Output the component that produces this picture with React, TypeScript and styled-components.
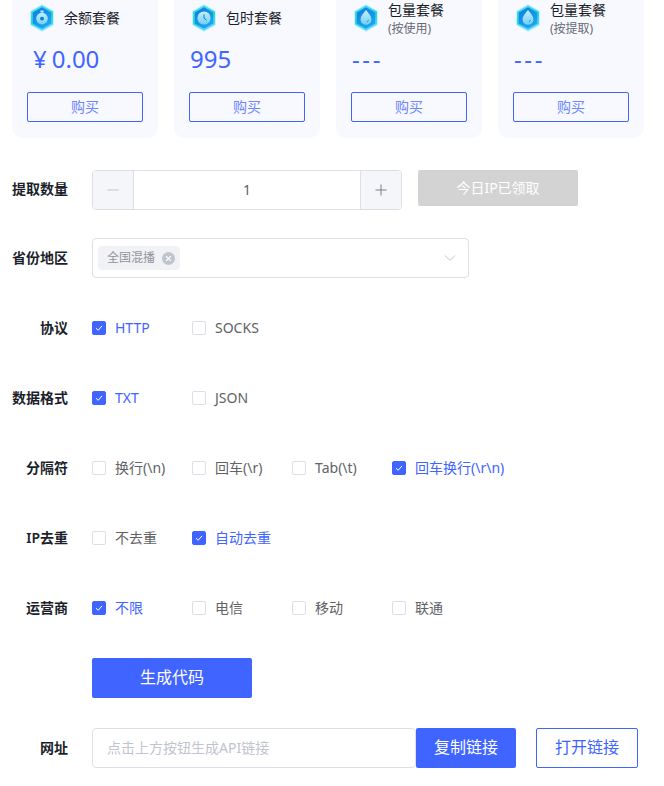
import styled, { createGlobalStyle } from 'styled-components'

const GlobalStyle = createGlobalStyle`
  html,
  body {
    margin: 0;
    height: 100%;
    overflow: hidden;
    background: #fff;
  }
  * {
    box-sizing: border-box;
  }
  body {
    font-family: 'Noto Sans', 'Noto Sans CJK SC', sans-serif;
    font-size: 14px;
    color: #606266;
  }
`

const BLUE = '#4064ff'

type IconKind = 'wallet' | 'clock' | 'drop'

const HexIcon = ({ kind, uid }: { kind: IconKind; uid: string }) => (
  <IconSvg viewBox="0 0 24 28">
    <defs>
      <linearGradient id={`${uid}-o`} x1="0" y1="0" x2="0.3" y2="1">
        <stop offset="0" stopColor="#5fdcf5" />
        <stop offset="0.6" stopColor="#1fdcc8" />
        <stop offset="1" stopColor="#58d8ff" />
      </linearGradient>
      <linearGradient id={`${uid}-i`} x1="0.2" y1="0" x2="0.8" y2="1">
        <stop offset="0" stopColor="#0d80e6" />
        <stop offset="1" stopColor="#22a8f0" />
      </linearGradient>
      <linearGradient id={`${uid}-g`} x1="0" y1="0" x2="0" y2="1">
        <stop offset="0" stopColor="#c4f0fd" />
        <stop offset="1" stopColor="#6fd0f5" />
      </linearGradient>
    </defs>
    <path d="M12 0 24 7V21L12 28 0 21V7Z" fill="#8fe8fa" fillOpacity="0.45" />
    <path d="M12 1.2 23 7.6V20.4L12 26.8 1 20.4V7.6Z" fill={`url(#${uid}-o)`} />
    <path d="M12 3.2 21.2 8.6V19.4L12 24.8 2.8 19.4V8.6Z" fill={`url(#${uid}-i)`} />
    {kind === 'wallet' && (
      <>
        <rect x="10.4" y="6.6" width="3.2" height="1.8" rx="0.4" fill="#bfeeff" />
        <circle cx="12" cy="14.6" r="5.8" fill={`url(#${uid}-g)`} />
        <circle cx="12" cy="14.6" r="1.9" fill="#1277c9" />
      </>
    )}
    {kind === 'clock' && (
      <>
        <circle cx="12" cy="14" r="6.6" fill={`url(#${uid}-g)`} />
        <path d="M12 10.4V14.2L14.6 16.2" fill="none" stroke="#1277c9" strokeWidth="1" />
      </>
    )}
    {kind === 'drop' && (
      <>
        <path d="M12 6C14.8 9.6 17.4 12 17.4 15.4A5.4 5.4 0 0 1 6.6 15.4C6.6 12 9.2 9.6 12 6Z" fill={`url(#${uid}-g)`} />
        <path d="M14.6 15.8A2.8 2.8 0 0 1 12.8 18" fill="none" stroke="#2a8fd8" strokeWidth="0.9" />
      </>
    )}
  </IconSvg>
)

const CheckMark = () => (
  <svg width="10" height="10" viewBox="0 0 10 10">
    <path d="M2 5.2 4.2 7.3 8 2.9" fill="none" stroke="#fff" strokeWidth="1" />
  </svg>
)

const plans = [
  { kind: 'wallet' as IconKind, title: '余额套餐', currency: '¥', value: '0.00' },
  { kind: 'clock' as IconKind, title: '包时套餐', value: '995' },
  { kind: 'drop' as IconKind, title: '包量套餐', sub: '(按使用)', value: '---' },
  { kind: 'drop' as IconKind, title: '包量套餐', sub: '(按提取)', value: '---' }
]

const optionRows = [
  {
    label: '协议',
    options: [
      { text: 'HTTP', on: true },
      { text: 'SOCKS' }
    ]
  },
  {
    label: '数据格式',
    options: [
      { text: 'TXT', on: true },
      { text: 'JSON' }
    ]
  },
  {
    label: '分隔符',
    options: [
      { text: '换行(\\n)' },
      { text: '回车(\\r)' },
      { text: 'Tab(\\t)' },
      { text: '回车换行(\\r\\n)', on: true }
    ]
  },
  {
    label: 'IP去重',
    options: [
      { text: '不去重' },
      { text: '自动去重', on: true }
    ]
  },
  {
    label: '运营商',
    options: [
      { text: '不限', on: true },
      { text: '电信' },
      { text: '移动' },
      { text: '联通' }
    ]
  }
]

const App = () => {
  return (
    <Page>
      <GlobalStyle />
      <CardRow>
        {plans.map((plan, i) => (
          <Card key={i}>
            <CardHead>
              <HexIcon kind={plan.kind} uid={`hex${i}`} />
              <CardText $hasSub={!!plan.sub}>
                <CardTitle>{plan.title}</CardTitle>
                {plan.sub && <CardSub>{plan.sub}</CardSub>}
              </CardText>
            </CardHead>
            <CardValue $empty={plan.value === '---'}>
              {plan.currency && <Currency>{plan.currency}</Currency>}
              {plan.value}
            </CardValue>
            <BuyButton>购买</BuyButton>
          </Card>
        ))}
      </CardRow>

      <StepperRow>
        <StepperLabel>提取数量</StepperLabel>
        <Stepper>
          <StepButton>
            <svg width="12" height="12" viewBox="0 0 12 12">
              <path d="M0.5 6H11.5" stroke="#c0c4cc" strokeWidth="1" />
            </svg>
          </StepButton>
          <StepValue>1</StepValue>
          <StepButton $right>
            <svg width="12" height="12" viewBox="0 0 12 12">
              <path d="M0.5 6H11.5M6 0.5V11.5" stroke="#7a7d8a" strokeWidth="1" />
            </svg>
          </StepButton>
        </Stepper>
        <ClaimButton>今日IP已领取</ClaimButton>
      </StepperRow>

      <Row>
        <Label>省份地区</Label>
        <SelectBox>
          <Tag>
            全国混播
            <TagClose>
              <svg width="13" height="13" viewBox="0 0 14 14">
                <circle cx="7" cy="7" r="7" fill="#c0c4cc" />
                <path d="M4.4 4.4 9.6 9.6M9.6 4.4 4.4 9.6" stroke="#fff" strokeWidth="1.4" />
              </svg>
            </TagClose>
          </Tag>
          <Chevron width="12" height="8" viewBox="0 0 12 8">
            <path d="M1 1.5 6 6.5 11 1.5" fill="none" stroke="#c0c4cc" strokeWidth="1" />
          </Chevron>
        </SelectBox>
      </Row>

      {optionRows.map(row => (
        <Row key={row.label}>
          <Label>{row.label}</Label>
          <Options>
            {row.options.map(opt => (
              <Option key={opt.text} $on={!!opt.on}>
                <Box $on={!!opt.on}>{opt.on && <CheckMark />}</Box>
                {opt.text}
              </Option>
            ))}
          </Options>
        </Row>
      ))}

      <Row>
        <Label />
        <GenerateButton>生成代码</GenerateButton>
      </Row>

      <Row>
        <Label>网址</Label>
        <UrlInput placeholder="点击上方按钮生成API链接" readOnly />
        <CopyButton>复制链接</CopyButton>
        <OpenButton>打开链接</OpenButton>
      </Row>
    </Page>
  )
}

export default App

const Page = styled.div`
  width: 664px;
  padding-left: 12px;
`

const IconSvg = styled.svg`
  width: 24px;
  height: 28px;
  flex: none;
`

const CardRow = styled.div`
  display: flex;
  gap: 16px;
  margin-top: -12px;
  margin-bottom: 32px;
`

const Card = styled.div`
  width: 146px;
  height: 150px;
  padding: 16px 15px;
  background: #f8f9ff;
  border-radius: 10px;
`

const CardHead = styled.div`
  display: flex;
  align-items: center;
  gap: 10px;
  height: 28px;
  padding-left: 3px;
`

const CardText = styled.div<{ $hasSub: boolean }>`
  padding-top: ${p => (p.$hasSub ? '4px' : '0')};
`

const CardTitle = styled.div`
  font-size: 14px;
  line-height: 18px;
  color: #1c1f2b;
`

const CardSub = styled.div`
  font-size: 12px;
  line-height: 20px;
  color: #666a75;
`

const CardValue = styled.div<{ $empty: boolean }>`
  height: 40px;
  margin: 8px 0 12px;
  padding-left: 1px;
  font-size: 24px;
  line-height: 38px;
  letter-spacing: ${p => (p.$empty ? '2.6px' : '0')};
  color: ${BLUE};
`

const Currency = styled.span`
  margin: 0 5px;
`

const BuyButton = styled.div`
  width: 116px;
  height: 30px;
  border: 1px solid ${BLUE};
  border-radius: 2px;
  font-size: 14px;
  line-height: 28px;
  text-align: center;
  color: #6c86ff;
`

const Row = styled.div`
  display: flex;
  align-items: center;
  height: 40px;
  margin-bottom: 30px;
`

const StepperRow = styled(Row)`
  margin-bottom: 28px;
`

const Label = styled.div`
  flex: none;
  width: 56px;
  margin-right: 24px;
  padding-bottom: 2px;
  font-size: 14px;
  font-weight: 600;
  text-align: right;
  white-space: nowrap;
  color: #1c1f2b;
`

const StepperLabel = styled(Label)`
  padding-bottom: 5px;
`

const Stepper = styled.div`
  display: flex;
  width: 310px;
  height: 40px;
  border: 1px solid #dcdfe6;
  border-radius: 4px;
  overflow: hidden;
`

const StepButton = styled.div<{ $right?: boolean }>`
  flex: none;
  display: flex;
  align-items: center;
  justify-content: center;
  width: 41px;
  background: #f5f6fa;
  border-${p => (p.$right ? 'left' : 'right')}: 1px solid #dcdfe6;
`

const StepValue = styled.div`
  flex: 1;
  line-height: 38px;
  text-align: center;
  color: #606266;
`

const ClaimButton = styled.div`
  align-self: flex-start;
  width: 160px;
  height: 36px;
  margin-left: 16px;
  background: #d3d3d3;
  border-radius: 2px;
  line-height: 35px;
  text-align: center;
  color: #fff;
`

const SelectBox = styled.div`
  display: flex;
  align-items: center;
  justify-content: space-between;
  width: 377px;
  height: 40px;
  padding: 0 12px 0 5px;
  border: 1px solid #dcdfe6;
  border-radius: 4px;
`

const Tag = styled.div`
  display: flex;
  align-items: center;
  height: 24px;
  padding: 0 5px 2px 9px;
  background: #f0f2f5;
  border-radius: 4px;
  font-size: 12px;
  color: #909399;
`

const TagClose = styled.span`
  display: flex;
  margin: 2px 0 0 7px;
`

const Chevron = styled.svg`
  flex: none;
`

const Options = styled.div`
  display: flex;
`

const Option = styled.div<{ $on: boolean }>`
  display: flex;
  align-items: center;
  width: 100px;
  font-size: 14px;
  line-height: 20px;
  white-space: nowrap;
  color: ${p => (p.$on ? BLUE : '#606266')};
`

const Box = styled.span<{ $on: boolean }>`
  flex: none;
  display: flex;
  align-items: center;
  justify-content: center;
  width: 14px;
  height: 14px;
  margin-right: 9px;
  border: 1px solid ${p => (p.$on ? BLUE : '#dcdfe6')};
  border-radius: 2px;
  background: ${p => (p.$on ? BLUE : '#fff')};
`

const GenerateButton = styled.div`
  width: 160px;
  height: 40px;
  background: ${BLUE};
  border-radius: 2px;
  font-size: 16px;
  line-height: 38px;
  text-align: center;
  color: #fff;
`

const UrlInput = styled.input`
  width: 324px;
  height: 40px;
  padding: 0 14px 2px;
  border: 1px solid #dcdfe6;
  border-radius: 4px;
  outline: none;
  font-family: inherit;
  font-size: 14px;
  &::placeholder {
    color: #c0c4cc;
  }
`

const CopyButton = styled.div`
  width: 100px;
  height: 40px;
  background: ${BLUE};
  border-radius: 2px;
  font-size: 16px;
  line-height: 38px;
  text-align: center;
  color: #fff;
`

const OpenButton = styled.div`
  width: 102px;
  height: 40px;
  margin-left: 20px;
  border: 1px solid ${BLUE};
  border-radius: 2px;
  font-size: 16px;
  line-height: 36px;
  text-align: center;
  color: ${BLUE};
`
